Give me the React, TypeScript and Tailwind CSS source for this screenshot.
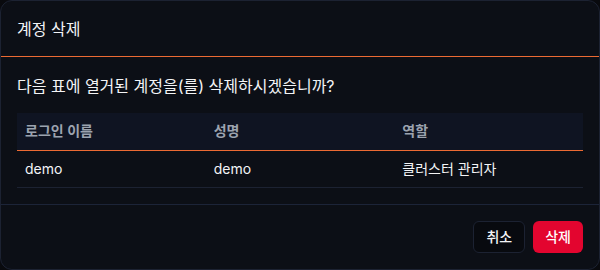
const rows = [{ login: 'demo', name: 'demo', role: '클러스터 관리자' }];

export default function App() {
  return (
    <div
      className="h-[270px] w-[600px] bg-[#090a0e] text-[#e5e7eb]"
      style={{ fontFamily: '"Inter", "Noto Sans CJK KR", sans-serif' }}
    >
      <div className="flex h-full flex-col rounded-xl border border-[#1c2232] bg-[#0c0f16]">
        <div className="flex h-[56px] items-center border-b border-[#ec6a33] px-4 text-base text-[#f3f4f6]">
          계정 삭제
        </div>
        <div className="border-b border-[#1c2438] px-4 pb-4 pt-[17px]">
          <p className="mb-[15px] text-base leading-6 text-[#f3f4f6]">다음 표에 열거된 계정을(를) 삭제하시겠습니까?</p>
          <table className="w-full table-fixed text-left text-sm">
            <thead>
              <tr className="border-b border-[#ec6a33] bg-[#0f1422]">
                <th className="h-[37px] px-2 font-semibold text-[#9ca3af]">로그인 이름</th>
                <th className="h-[37px] px-2 font-semibold text-[#9ca3af]">성명</th>
                <th className="h-[37px] px-2 font-semibold text-[#9ca3af]">역할</th>
              </tr>
            </thead>
            <tbody>
              {rows.map((r) => (
                <tr key={r.login} className="border-b border-[#1c2232]">
                  <td className="h-[37px] px-2 text-[#f3f4f6]">{r.login}</td>
                  <td className="h-[37px] px-2 text-[#f3f4f6]">{r.name}</td>
                  <td className="h-[37px] px-2 text-[#f3f4f6]">{r.role}</td>
                </tr>
              ))}
            </tbody>
          </table>
        </div>
        <div className="flex flex-1 items-center justify-end gap-2 px-4">
          <button className="h-8 rounded-md border border-[#1c2232] bg-[#080a0f] px-3 text-sm font-medium text-[#f3f4f6]">
            취소
          </button>
          <button className="h-8 rounded-md bg-[#e3052f] px-3 text-sm font-medium text-white">삭제</button>
        </div>
      </div>
    </div>
  );
}
